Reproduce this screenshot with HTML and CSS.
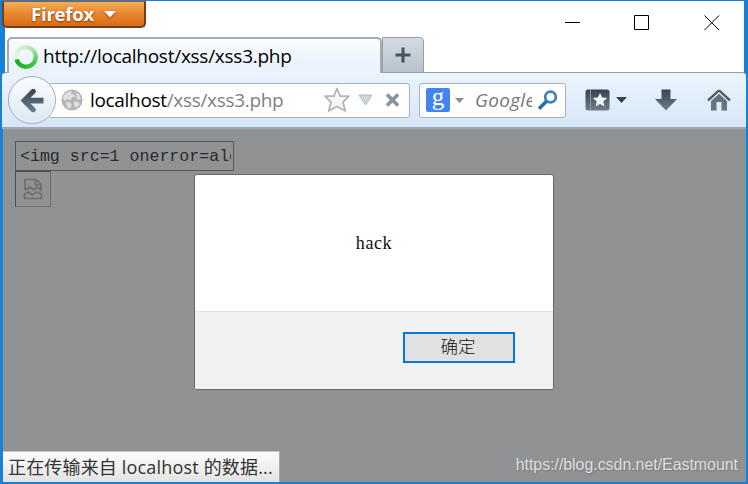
FILE: index.html
```html
<!DOCTYPE html>
<html lang="zh-CN">
<head>
<meta charset="utf-8">
<title>Firefox</title>
<link rel="stylesheet" href="styles.css">
</head>
<body>
<div class="window">
  <header class="chrome">
    <div class="titlebar">
      <button class="app-menu"><span>Firefox</span><svg width="12" height="8" viewBox="0 0 12 8"><path d="M0 1h12L6 7.500z" fill="#fff"/></svg></button>
      <div class="controls">
        <svg width="15" height="16" viewBox="0 0 15 16"><path d="M0 7.500h15" stroke="#000"/></svg>
        <svg width="15" height="16" viewBox="0 0 15 16"><path d="M.5 .5h14v14H.5z" fill="none" stroke="#000"/></svg>
        <svg width="16" height="16" viewBox="0 0 16 16"><path d="M.5 .5l14.500 14.500M15 .5L.5 15" stroke="#000" stroke-width="1"/></svg>
      </div>
    </div>
    <div class="tabs">
      <div class="tab">
        <i class="spinner"></i>
        <span class="tab-title">http://localhost/xss/xss3.php</span>
      </div>
      <div class="new-tab"><svg width="16" height="16" viewBox="0 0 16 16"><path d="M8 .5v15M.5 8h15" stroke="#46535f" stroke-width="3"/></svg></div>
    </div>
  </header>
  <nav class="toolbar">
    <div class="back">
      <svg width="24" height="25" viewBox="0 0 24 25"><defs><linearGradient id="g" x2="0" y2="1"><stop stop-color="#35434f"/><stop offset="1" stop-color="#6e7e8c"/></linearGradient></defs><path d="M.5 12.500L11.500 1.500q2-1.500 3.700.2 1.500 1.900-.2 3.600L10.500 9.800H23.500v5.600H10.500l4.500 4.500q1.700 1.700.2 3.600-1.700 1.700-3.700.2z" fill="url(#g)"/></svg>
    </div>
    <div class="address">
      <svg class="globe" width="22" height="22" viewBox="0 0 22 22"><circle cx="11" cy="11" r="10.500" fill="#b4b4b4"/><path d="M3 6L7 2.500l4-.8-1 2.800 3 1 1.500 2-3.500 1-1.500 3L6.500 10 4 12 1.500 9zM14 3l4 2 2 5-3 1-2-2 1-3zM5 13l4 .5 2 2-2 4.500-3-2zM13 12l4 1 2 2-3.500 4-2.500-3z" fill="#dedede"/></svg>
      <span class="url"><b>localhost</b>/xss/xss3.php</span>
      <svg class="star" width="26" height="26" viewBox="0 0 26 26"><path d="M13 1.500l3.200 7.700h8.800l-6 6 2.300 8.800L13 19.500 4.700 24 7 15.200l-6-6h8.800z" fill="#f6f6f6" stroke="#b4b4b4" stroke-width="1.800" stroke-linejoin="round"/></svg>
      <svg class="drop" width="15" height="12" viewBox="0 0 15 12"><path d="M1 1h13L7.500 11z" fill="#ced6dc" stroke="#aeb9c1"/></svg>
      <svg class="stop" width="15" height="14" viewBox="0 0 15 14"><path d="M2 1.500l11 11M13 1.500l-11 11" stroke="#8594a2" stroke-width="3.600"/></svg>
    </div>
    <div class="search">
      <span class="engine">g</span>
      <svg class="engine-arrow" width="9" height="5" viewBox="0 0 9 5"><path d="M0 0h9L4.500 5z" fill="#8c8c8c"/></svg>
      <span class="hint">Google</span>
      <svg width="21" height="21" viewBox="0 0 21 21"><circle cx="13.500" cy="7" r="5.300" fill="none" stroke="#3d82b9" stroke-width="2.800"/><path d="M9.500 11.200L2 18.700" stroke="#35699c" stroke-width="3.600"/></svg>
    </div>
    <svg class="bookmarks" width="25" height="22" viewBox="0 0 25 22"><rect x=".5" y=".5" width="24" height="21" rx="2.500" fill="url(#g)"/><path d="M5.500 1v20" stroke="#8e9aa5"/><path d="M15 4l2.100 4.600 5 .5-3.800 3.400 1.100 5L15 15l-4.400 2.500 1.100-5-3.800-3.400 5-.5z" fill="#f2f7fc"/></svg>
    <svg class="bookmarks-arrow" width="11" height="6" viewBox="0 0 11 6"><path d="M0 0h11L5.500 6z" fill="#35424e"/></svg>
    <svg class="download" width="22" height="22" viewBox="0 0 22 22"><path d="M6.500 .5h9v9.500H22L11 21.500 0 10h6.500z" fill="url(#g)"/></svg>
    <svg class="home" width="24" height="22" viewBox="0 0 24 22"><path d="M12 1.300L1 11.400M12 1.300l11 10.100" stroke="#4b5a67" stroke-width="2.400"/><path d="M12 4.800l8 7.200v9.500h-5.500V13h-5v8.500H4V12z" fill="#667482"/></svg>
  </nav>
  <main class="page">
    <div class="field"><span>&lt;img src=1 onerror=alert</span></div>
    <div class="broken"><svg width="20" height="22" viewBox="0 0 20 22"><g fill="none" stroke="#6d6e70" stroke-width="1.700"><path d="M2 11V1.500h11l5 5V12l-4-3-3 3-4-3-4 3zM12.500 2v5H18M1.500 20.500V16l4-2 4 3 4-3 5 2v4.500z"/></g></svg></div>
    <div class="status">正在传输来自 localhost 的数据...</div>
    <div class="watermark">https://blog.csdn.net/Eastmount</div>
    <div class="dialog">
      <div class="message">hack</div>
      <div class="actions"><button class="ok">确定</button></div>
    </div>
  </main>
</div>
</body>
</html>
```
FILE: styles.css
```css
* { box-sizing: border-box; }
body { margin: 0; overflow: hidden; }
svg { display: block; flex: none; }
button { margin: 0; padding: 0; }

.window {
  width: 748px;
  height: 484px;
  background: #1781d8;
  font-family: "Open Sans", "Noto Sans CJK SC", sans-serif;
}
.chrome {
  height: 73px;
  margin: 0 4px 0 5px;
  border-top: 1px solid #1781d8;
  background: #fff;
}
.titlebar {
  display: flex;
  justify-content: space-between;
  height: 36px;
}
.app-menu {
  display: flex;
  align-items: center;
  gap: 10px;
  width: 144px;
  height: 27px;
  margin-left: -3px;
  padding: 0 0 1px 27px;
  border: 2px solid #70401b;
  border-top: 1px solid #9f5a21;
  border-radius: 0 0 5px 5px;
  background: linear-gradient(#f3ae56, #e9852f 50%, #d96c19);
  color: #fff;
  font: bold 18.500px "Open Sans", sans-serif;
  letter-spacing: -.2px;
  text-shadow: 0 1px 2px #7c3c0e;
}
.app-menu svg { filter: drop-shadow(0 1px 1px #8e4813); }
.controls {
  display: flex;
  gap: 54px;
  margin: 14px 24px 0 0;
}
.controls svg:not(:last-child) {
  margin-left: -1px;
  margin-right: 1px;
}
.tabs {
  display: flex;
  height: 36px;
  border-bottom: 1px solid #9b9fa4;
}
.tab {
  display: flex;
  align-items: center;
  width: 375px;
  height: 36px;
  margin-left: 2px;
  padding: 1px 0 0 6px;
  border: 2px solid #a6a9ad;
  border-bottom: 0;
  border-radius: 5px 5px 0 0;
  background: linear-gradient(#fbfcfe, #eaf3fc 75%);
}
.spinner {
  width: 24px;
  height: 24px;
  margin-left: -1px;
  border-radius: 50%;
  background: conic-gradient(#c6edc6, #a8e3a8 12%, #40c641 35%, #10ad12 70%, #e6f8e6 72%, #c6edc6);
  -webkit-mask: radial-gradient(circle, transparent 7px, #000 8px);
  mask: radial-gradient(circle, transparent 7px, #000 8px);
}
.tab-title {
  margin-left: 5px;
  padding-bottom: 2px;
  color: #000;
  font-size: 19px;
  letter-spacing: -.26px;
  white-space: nowrap;
}
.new-tab {
  display: grid;
  place-items: center;
  width: 42px;
  height: 36px;
  border: 1px solid #979fa8;
  border-radius: 0 4px 0 0;
  background: linear-gradient(#d3dbe3, #b7c2cc);
}
.toolbar {
  display: flex;
  align-items: center;
  height: 56px;
  margin: 0 2px;
  padding-left: 6px;
  border-bottom: 2px solid #98aabd;
  border-radius: 3px 3px 0 0;
  background: linear-gradient(#ebf4fd, #d7e6f6);
}
.back {
  display: grid;
  place-items: center;
  z-index: 1;
  width: 48px;
  height: 48px;
  border: 1.500px solid #9faab6;
  border-radius: 50%;
  background: linear-gradient(#fafcff, #dce8f4);
  box-shadow: inset 0 0 0 1px #f6fafe;
}
.address, .search {
  display: flex;
  align-items: center;
  height: 35px;
  border: 1px solid #a3b1c0;
  border-radius: 3px;
  background: #fff;
}
.address { width: 362px; margin-left: -8px; }
.globe { margin-left: 12px; }
.url {
  width: 196px;
  margin-left: 7px;
  color: #808080;
  font-size: 19px;
  letter-spacing: -.32px;
  white-space: nowrap;
}
.url b { color: #000; font-weight: 400; }
.star { margin-left: 38px; }
.drop { margin-left: 8px; }
.stop { margin-left: 12px; }
.search { width: 147px; margin-left: 9px; }
.engine {
  width: 24px;
  height: 24px;
  margin-left: 6px;
  border-radius: 2px;
  background: #4384f1;
  color: #fff;
  font: 25px/18px "Liberation Serif", serif;
  text-align: center;
}
.engine-arrow { margin-left: 5px; }
.hint {
  width: 57px;
  margin: 0 5px 0 11px;
  overflow: hidden;
  color: #777;
  font-size: 19px;
  font-style: italic;
  letter-spacing: .3px;
  white-space: nowrap;
}
.bookmarks { margin-left: 19px; }
.bookmarks-arrow { margin-left: 6px; }
.download { margin-left: 28px; }
.home { margin-left: 30px; }

.page {
  position: relative;
  height: 353px;
  margin: 0 2px 0 3px;
  padding: 12px;
  background: repeating-conic-gradient(#8f9091 0 25%, #929394 0 50%) 0 0 / 4px 4px;
}
.field {
  display: flex;
  align-items: center;
  width: 219px;
  height: 30px;
  padding: 1px 2px 0 4px;
  border: 1px solid #55575a;
}
.field span {
  overflow: hidden;
  color: #292a30;
  font: 16.600px "Liberation Mono", monospace;
  white-space: nowrap;
}
.broken {
  display: grid;
  place-items: center;
  width: 36px;
  height: 36px;
  border: 1px solid #6b6c6e;
  border-top-color: #4c4d4f;
  border-left-color: #4c4d4f;
}
.status {
  position: absolute;
  left: 0;
  bottom: 0;
  width: 277px;
  height: 31px;
  padding-left: 5px;
  border-top: 1px solid #c5c5c5;
  border-right: 1px solid #aaa;
  background: linear-gradient(#fcfcfc, #e3e3e3);
  color: #333;
  font-size: 18px;
  line-height: 31px;
  letter-spacing: .17px;
  white-space: nowrap;
}
.watermark {
  position: absolute;
  right: 8px;
  bottom: 7px;
  color: #dedede;
  font: 16px/20px "Liberation Sans", sans-serif;
  letter-spacing: -.06px;
  text-shadow: 1px 1px 1px #7b7b7b;
}
.dialog {
  position: absolute;
  left: 191px;
  top: 45px;
  width: 360px;
  height: 216px;
  overflow: hidden;
  border: 1px solid #67686a;
  border-radius: 3px;
  background: #fff;
}
.message {
  height: 137px;
  border-bottom: 1px solid #e2e2e2;
  color: #111;
  font: 18px/137px "Liberation Serif", serif;
  letter-spacing: .6px;
  text-align: center;
}
.actions {
  display: flex;
  justify-content: flex-end;
  height: 77px;
  padding: 20px 38px 0 0;
  background: #f1f1f1;
}
.ok {
  width: 112px;
  height: 31px;
  padding: 0 2px 3px 0;
  border: 2px solid #0078d7;
  background: #e1e1e1;
  color: #111;
  font: 300 17.500px/24px "Noto Sans CJK SC", sans-serif;
}
```
